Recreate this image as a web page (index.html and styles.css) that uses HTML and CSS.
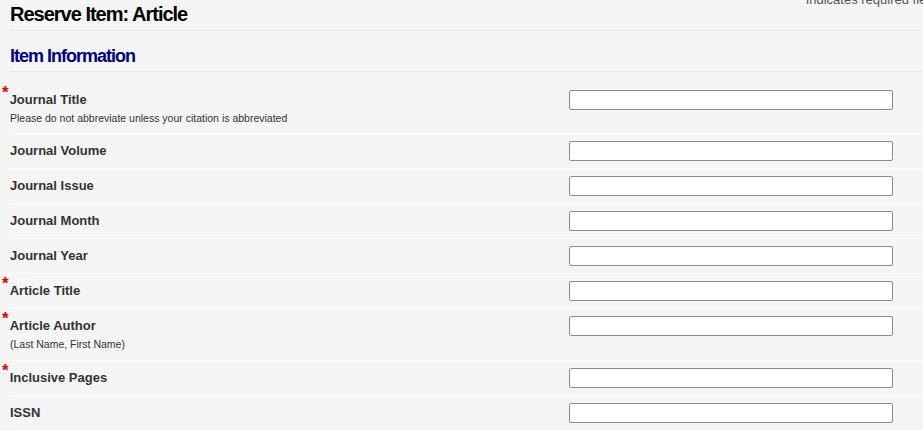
FILE: index.html
```html
<!DOCTYPE html>
<html lang="en">
<head>
<meta charset="utf-8">
<title>Reserve Item: Article</title>
<link rel="stylesheet" href="styles.css">
</head>
<body>
<div class="page">
  <div class="page-head">
    <h1 class="page-title">Reserve Item: Article</h1>
    <div class="req-note"><span class="req">*</span>Indicates required fields</div>
  </div>
  <h2 class="section-title">Item Information</h2>
  <div class="form-list">
    <div class="row">
      <div class="label-col">
        <label class="label"><span class="req">*</span>Journal Title</label>
        <div class="hint">Please do not abbreviate unless your citation is abbreviated</div>
      </div>
      <input class="field" type="text">
    </div>
    <div class="row">
      <div class="label-col"><label class="label">Journal Volume</label></div>
      <input class="field" type="text">
    </div>
    <div class="row">
      <div class="label-col"><label class="label">Journal Issue</label></div>
      <input class="field" type="text">
    </div>
    <div class="row">
      <div class="label-col"><label class="label">Journal Month</label></div>
      <input class="field" type="text">
    </div>
    <div class="row">
      <div class="label-col"><label class="label">Journal Year</label></div>
      <input class="field" type="text">
    </div>
    <div class="row">
      <div class="label-col"><label class="label"><span class="req">*</span>Article Title</label></div>
      <input class="field" type="text">
    </div>
    <div class="row">
      <div class="label-col">
        <label class="label"><span class="req">*</span>Article Author</label>
        <div class="hint hint-author">(Last Name, First Name)</div>
      </div>
      <input class="field" type="text">
    </div>
    <div class="row">
      <div class="label-col"><label class="label"><span class="req">*</span>Inclusive Pages</label></div>
      <input class="field" type="text">
    </div>
    <div class="row">
      <div class="label-col"><label class="label">ISSN</label></div>
      <input class="field" type="text">
    </div>
  </div>
</div>
</body>
</html>
```

FILE: styles.css
```css
html, body {
  margin: 0;
  padding: 0;
  background: #f5f5f5;
  overflow: hidden;
}
body {
  font-family: "Liberation Sans", Arial, sans-serif;
  color: #333;
}
.page {
  padding-left: 9px;
}
.page-head {
  display: flex;
  align-items: flex-start;
  border-bottom: 1px solid #e6e6e6;
}
.page-title {
  margin: 0;
  padding: 2px 0 4px 1px;
  font-size: 20px;
  line-height: 24px;
  font-weight: bold;
  letter-spacing: -1px;
  color: #000;
}
.req-note {
  margin-left: auto;
  margin-right: -120px;
  width: 237px;
  margin-top: -8px;
  font-size: 13px;
  line-height: 15px;
  color: #555;
  white-space: nowrap;
}
.section-title {
  margin: 0;
  padding: 14px 0 4px 1px;
  font-size: 18px;
  line-height: 22px;
  font-weight: bold;
  letter-spacing: -1px;
  color: #000080;
  border-bottom: 1px solid #e6e6e6;
}
.form-list {
  margin-top: 11px;
}
.row {
  display: grid;
  grid-template-columns: 560px 324px;
  padding: 7px 0;
  border-bottom: 1px solid #ffffff;
}
.label-col {
  padding-left: 1px;
}
.label {
  display: block;
  font-size: 13px;
  line-height: 20px;
  font-weight: bold;
  color: #333;
}
.req {
  margin-left: -8px;
  padding-right: 1px;
  font-size: 17px;
  line-height: 0;
  font-weight: bold;
  color: #e00000;
  vertical-align: 6px;
}
.req-note .req {
  vertical-align: 0;
}
.hint {
  font-size: 10.5px;
  line-height: 16px;
  color: #333;
}
.hint-author {
  padding-bottom: 1px;
}
.field {
  box-sizing: border-box;
  width: 324px;
  height: 20px;
  margin: 0;
  padding: 1px 4px;
  border: 1px solid #8c8a9e;
  border-radius: 2px;
  background: #fff;
  font: 13px "Liberation Sans", Arial, sans-serif;
}
```
